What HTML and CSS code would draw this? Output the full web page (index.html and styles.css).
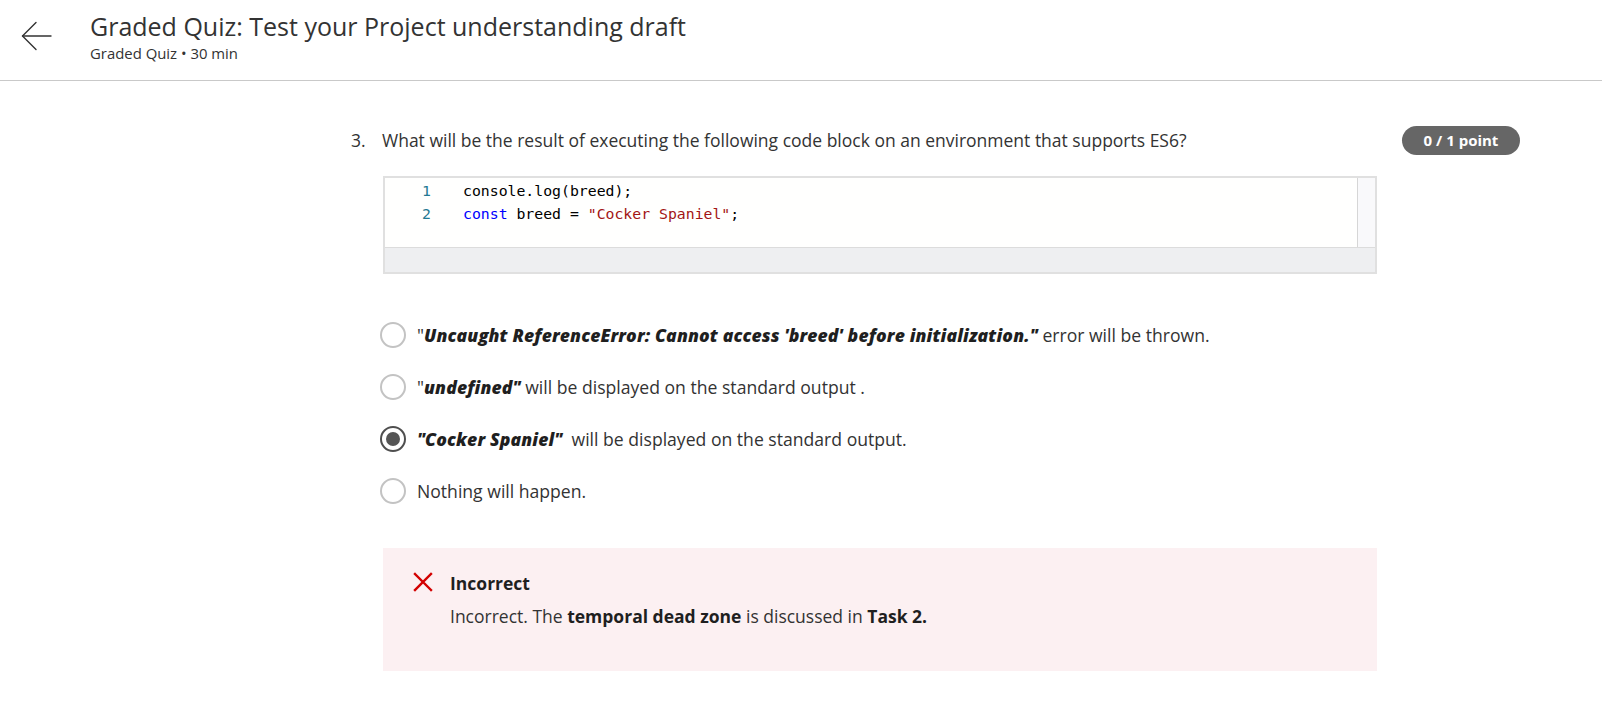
FILE: index.html
```html
<!DOCTYPE html>
<html lang="en">
<head>
<meta charset="utf-8">
<title>Graded Quiz</title>
<link rel="stylesheet" href="styles.css">
</head>
<body>
<header class="topbar">
  <button class="back" aria-label="Back">
    <svg width="31" height="30" viewBox="0 0 31 30" fill="none" stroke="#333" stroke-width="1.4" stroke-linecap="round" stroke-linejoin="round">
      <path d="M1.5 15 H30"/>
      <path d="M15 1.5 L1.5 15 L15 28.5"/>
    </svg>
  </button>
  <div class="titles">
    <h1 class="title">Graded Quiz: Test your Project understanding draft</h1>
    <div class="subtitle">Graded Quiz • 30 min</div>
  </div>
</header>

<main class="page">
  <section class="question">
    <div class="q-head">
      <span class="q-num">3.</span>
      <span class="q-text">What will be the result of executing the following code block on an environment that supports ES6?</span>
    </div>
    <div class="q-body">
      <div class="code">
        <div class="editor">
          <div class="lines">
            <div class="line"><span class="ln">1</span><span class="src">console.log(breed);</span></div>
            <div class="line"><span class="ln">2</span><span class="src"><span class="kw">const</span> breed = <span class="str">"Cocker Spaniel"</span>;</span></div>
          </div>
          <div class="gutter-r"></div>
        </div>
        <div class="code-foot"></div>
      </div>

      <ul class="options">
        <li class="opt"><span class="radio"></span><span class="opt-text">"<b><i>Uncaught ReferenceError: Cannot access 'breed' before initialization."</i></b> error will be thrown.</span></li>
        <li class="opt"><span class="radio"></span><span class="opt-text">"<b><i>undefined"</i></b> will be displayed on the standard output .</span></li>
        <li class="opt"><span class="radio checked"></span><span class="opt-text"><b><i>"Cocker Spaniel"</i></b>&nbsp; will be displayed on the standard output.</span></li>
        <li class="opt"><span class="radio"></span><span class="opt-text">Nothing will happen.</span></li>
      </ul>

      <div class="feedback">
        <svg class="x-icon" width="20" height="20" viewBox="0 0 20 20" stroke="#d30001" stroke-width="2.4" stroke-linecap="square">
          <path d="M2 2 L18 18 M18 2 L2 18"/>
        </svg>
        <div class="fb-text">
          <div class="fb-title">Incorrect</div>
          <div class="fb-body">Incorrect. The <b>temporal dead zone</b> is discussed in <b>Task 2.</b></div>
        </div>
      </div>
    </div>
  </section>
  <div class="badge">0 / 1 point</div>
</main>
</body>
</html>
```

FILE: styles.css
```css
* { box-sizing: border-box; }
html, body { margin: 0; padding: 0; background: #fff; }
body {
  font-family: "Open Sans", "Liberation Sans", sans-serif;
  color: #333;
}

.topbar {
  display: flex;
  align-items: flex-start;
  height: 81px;
  border-bottom: 1px solid #c9c9c9;
  padding-left: 21px;
}
.back {
  border: 0;
  background: none;
  padding: 0;
  margin-top: 21px;
  width: 31px;
  height: 30px;
  cursor: pointer;
}
.back svg { display: block; }
.titles {
  margin-left: 38px;
  padding-top: 10px;
}
.title {
  margin: 0;
  font-size: 25px;
  line-height: 32px;
  font-weight: 400;
  color: #333;
}
.subtitle {
  margin-top: 2px;
  font-size: 14.9px;
  line-height: 18px;
  color: #333;
}

.page {
  display: flex;
  align-items: flex-start;
  gap: 25px;
  padding: 47px 0 0 351px;
}
.question { width: 1026px; }
.q-head {
  display: flex;
  font-size: 17.5px;
  line-height: 24px;
  color: #333;
}
.q-num { width: 31px; flex: none; }
.q-body { padding-left: 32px; }

.code {
  margin-top: 24px;
  border: 2px solid #e0e0e0;
  background: #eeeff1;
}
.editor {
  display: flex;
  height: 70px;
  background: #fffffe;
  border-bottom: 1px solid #dcdcdc;
}
.lines {
  flex: 1;
  padding-top: 1px;
  font-family: "DejaVu Sans Mono", "Liberation Mono", monospace;
  font-size: 14.8px;
  line-height: 23px;
  color: #000;
}
.line { display: flex; }
.ln {
  width: 46px;
  text-align: right;
  color: #237893;
  flex: none;
}
.src { padding-left: 32px; white-space: pre; }
.kw { color: #0000ff; }
.str { color: #a31515; }
.gutter-r {
  width: 18px;
  border-left: 1px solid #d6d6d6;
  background: #f9f9fb;
}
.code-foot { height: 24px; }

.options {
  list-style: none;
  margin: 48px 0 0 -3px;
  padding: 0;
  display: flex;
  flex-direction: column;
  gap: 27px;
}
.opt {
  display: flex;
  align-items: center;
  height: 25px;
  font-size: 17.6px;
  line-height: 24px;
  color: #333;
}
.opt b { color: #1f1f1f; font-weight: 800; letter-spacing: 0.12px; }
.radio {
  flex: none;
  width: 26px;
  height: 26px;
  border-radius: 50%;
  border: 2px solid #c3c3c3;
  margin-right: 11px;
  display: flex;
  align-items: center;
  justify-content: center;
}
.radio.checked { border-color: #4f4f4f; }
.radio.checked::after {
  content: "";
  width: 14px;
  height: 14px;
  border-radius: 50%;
  background: #555;
}

.feedback {
  margin-top: 45px;
  background: #fcf0f2;
  display: flex;
  align-items: flex-start;
  gap: 17px;
  padding: 24px 30px 43px 30px;
}
.x-icon { flex: none; display: block; }
.fb-text { margin-top: -1px; font-size: 17.5px; line-height: 24px; color: #333; }
.fb-title { font-weight: 700; color: #1f1f1f; }
.fb-body { margin-top: 9px; }
.fb-body b { color: #1f1f1f; }

.badge {
  margin-top: -2px;
  width: 118px;
  height: 29px;
  border-radius: 15px;
  background: #666;
  color: #fff;
  font-size: 15px;
  font-weight: 700;
  line-height: 29px;
  text-align: center;
}
```
